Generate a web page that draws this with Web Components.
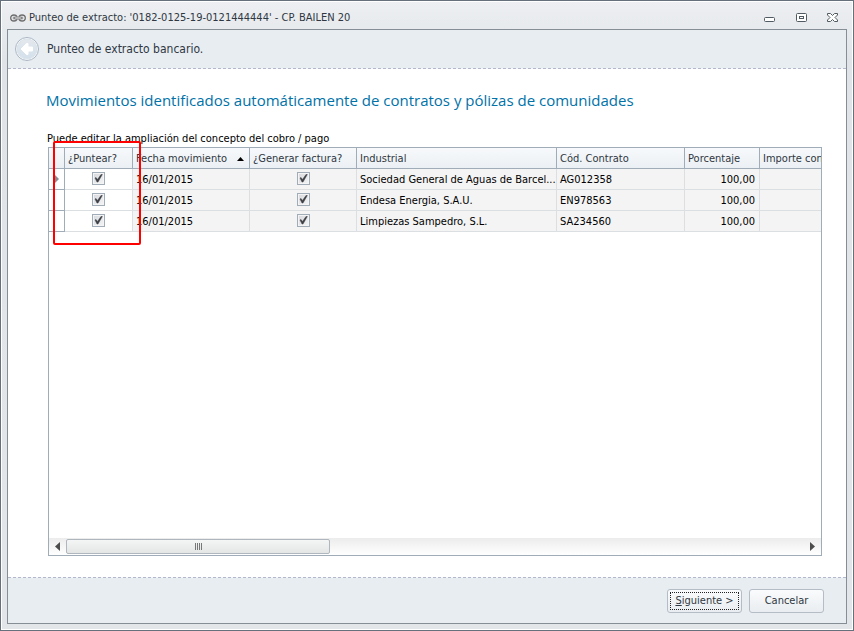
<!DOCTYPE html>
<html lang="es">
<head>
<meta charset="utf-8">
<title>Punteo de extracto</title>
<style>
html, body { margin: 0; height: 100%; }
body { font-family: "DejaVu Sans Condensed", "Noto Sans", sans-serif; font-size: 11px; color: #000; }
</style>
</head>
<body>
<wizard-window>
  <window-title slot="title">Punteo de extracto: '0182-0125-19-0121444444' - CP. BAILEN 20</window-title>
  <wizard-header slot="header">Punteo de extracto bancario.</wizard-header>
  <movements-page slot="page">
    <span slot="heading">Movimientos identificados automáticamente de contratos y pólizas de comunidades</span>
    <span slot="hint">Puede editar la ampliación del concepto del cobro / pago</span>
    <movements-grid></movements-grid>
  </movements-page>
  <push-button slot="actions" focused><u>S</u>iguiente &gt;</push-button>
  <push-button slot="actions">Cancelar</push-button>
</wizard-window>

<script>
const define = (name, html, setup) => {
  const template = document.createElement('template');
  template.innerHTML = html;
  customElements.define(name, class extends HTMLElement {
    constructor() {
      super();
      this.attachShadow({ mode: 'open' }).append(template.content.cloneNode(true));
    }
    connectedCallback() { if (setup) setup(this, this.shadowRoot); }
  });
};

define('wizard-window', `
<style>
  :host { display: flex; flex-direction: column; box-sizing: border-box; min-height: 100vh; padding: 1px 6px 6px;
    border: 1px solid #66707c; box-shadow: inset 0 0 0 1px #fff; background: linear-gradient(#edeff2, #e0e4e8 60px, #e3e6e9); }
  .panel { flex: 1; display: flex; flex-direction: column; border: 1px solid #868e95; background: #fff; min-width: 0; }
  main { flex: 1; display: flex; flex-direction: column; min-width: 0; }
  .dash { height: 1px; background: repeating-linear-gradient(90deg, #b3b9ca 0 3px, #f3f5f8 3px 5px); }
  footer { display: flex; justify-content: flex-end; gap: 7px; padding: 11px 22px 10px; background: #e8edf1; }
</style>
<slot name="title"></slot>
<div class="panel">
  <slot name="header"></slot>
  <div class="dash"></div>
  <main><slot name="page"></slot></main>
  <div class="dash"></div>
  <footer><slot name="actions"></slot></footer>
</div>`);

define('window-title', `
<style>
  :host { display: flex; align-items: center; height: 27px; padding: 4px 7px 0 3px; box-sizing: border-box; color: #2f3742; }
  .text { flex: 1; padding-left: 3px; white-space: nowrap; overflow: hidden; text-overflow: ellipsis; }
  .buttons { display: flex; gap: 19px; }
  button { display: flex; width: 13px; height: 13px; padding: 0; border: 0; background: none; }
  svg { display: block; }
</style>
<svg width="16" height="10" viewBox="0 0 16 10" fill="none">
  <path d="M7 3.500C6.500 2.500 5.500 2 4 2 2 2 .7 3.200.7 5S2 8 4 8c1.500 0 2.500-.5 3-1.500M9 3.500C9.500 2.500 10.500 2 12 2c2 0 3.300 1.200 3.300 3S14 8 12 8c-1.500 0-2.500-.5-3-1.500" stroke="#6a6a6a" stroke-width="1.300"/>
  <path d="M5.500 4.200H3.300v1.600h2.200M10.500 4.200h2.200v1.600h-2.200" stroke="#8d8d8d"/>
  <rect x="4.500" y="4" width="7" height="2" rx="1" fill="#eee" stroke="#5c5c5c" stroke-width=".8"/>
</svg>
<span class="text"><slot></slot></span>
<div class="buttons">
  <button aria-label="Minimizar"><svg width="13" height="13" fill="#fff" stroke="#505a62"><rect x="1.500" y="6.500" width="10" height="4" rx="1"/></svg></button>
  <button aria-label="Maximizar"><svg width="13" height="13" fill="#fff" stroke="#505a62"><rect x="1.500" y="2.500" width="10" height="8" rx="1"/><rect x="4.500" y="5.500" width="4" height="2"/></svg></button>
  <button aria-label="Cerrar"><svg width="13" height="13" fill="#fff" stroke="#505a62"><path d="M.5 2.500h3l2 2 2-2h3v1.500l-2.500 2.500 2.500 2.500v1.500h-3l-2-2-2 2h-3v-1.500l2.500-2.500-2.500-2.500z"/></svg></button>
</div>`);

define('wizard-header', `
<style>
  :host { display: flex; align-items: center; gap: 8px; height: 38px; padding-left: 7px; background: #e8edf1; color: #2f3742; font-size: 12px; white-space: nowrap; }
  button { width: 24px; height: 24px; padding: 0; border: 0; background: none; }
  svg { display: block; }
</style>
<button aria-label="Atrás"><svg width="24" height="24" viewBox="0 0 24 24">
  <defs><linearGradient id="g" x2="0" y2="1"><stop stop-color="#e3e8ed"/><stop offset="1" stop-color="#d3e0eb"/></linearGradient></defs>
  <circle cx="12" cy="12" r="11.500" fill="#fafcfd" stroke="#aab5c3"/><circle cx="12" cy="12" r="10" fill="url(#g)" stroke="#dbe3ea"/>
  <path d="M6 12l5.500-5.500h1.500V10h4.500v4H13v3.500h-1.500z" fill="#fff" stroke="#fff" stroke-linejoin="round"/>
</svg></button>
<slot></slot>`);

define('movements-page', `
<style>
  :host { flex: 1; display: flex; flex-direction: column; padding: 19px 24px 21px 40px; min-width: 0; }
  h1 { margin: 0 0 0 -2px; font: 15px/24px "Open Sans", "Noto Sans", sans-serif; color: #0072a8; }
  p { margin: 19px 0 0 -1px; line-height: 15px; }
</style>
<h1><slot name="heading"></slot></h1>
<p><slot name="hint"></slot></p>
<slot></slot>`);

define('check-box', `
<style>
  :host { display: inline-block; vertical-align: top; }
  label { display: grid; width: 13px; height: 13px; }
  input, svg { grid-area: 1 / 1; }
  input { appearance: none; box-sizing: border-box; width: 13px; height: 13px; margin: 0; border: 1px solid #a0acb8;
    background: linear-gradient(135deg, #d6d8dc, #f4f5f6); box-shadow: inset 0 0 0 1px #f4f4f4; }
  svg { pointer-events: none; visibility: hidden; }
  input:checked + svg { visibility: visible; }
</style>
<label><input type="checkbox" checked><svg width="13" height="13"><path d="M3 6l1-.5 1.500 2L9 2.500h1.300L6 10H5z" fill="#3c3f44" stroke="#3c3f44" stroke-width=".5"/></svg></label>`,
(el, root) => root.querySelector('input').setAttribute('aria-label', el.getAttribute('label')));

define('scroll-bar', `
<style>
  :host { display: flex; align-items: center; height: 17px; background: linear-gradient(#ececec, #fff); }
  button { display: flex; align-items: center; justify-content: center; width: 17px; height: 17px; padding: 0; border: 0; background: none; }
  .track { flex: 1; }
  .thumb { display: flex; align-items: center; justify-content: center; gap: 1px; box-sizing: border-box; width: 264px; height: 15px;
    border: 1px solid #b0b6bd; border-radius: 2px; background: linear-gradient(#f4f5f5, #e4e6e6); }
  i { width: 1px; height: 7px; background: #777; }
</style>
<button aria-label="Desplazar a la izquierda"><svg width="5" height="9"><path d="M5 0v9L0 4.500z" fill="#4c4c4c"/></svg></button>
<div class="track"><div class="thumb"><i></i><i></i><i></i><i></i></div></div>
<button aria-label="Desplazar a la derecha"><svg width="5" height="9"><path d="M0 0v9l5-4.500z" fill="#4c4c4c"/></svg></button>`);

define('movements-grid', `
<style>
  :host { position: relative; flex: 1; display: flex; flex-direction: column; border: 1px solid #a0acb8; margin-top: 1px; }
  .view { flex: 1; overflow: hidden; width: 0; min-width: 100%; }
  table { table-layout: fixed; width: 831px; border-spacing: 0; }
  th, td { box-sizing: border-box; height: 21px; padding: 2px 3px 0 3px; font-weight: normal; text-align: left; line-height: 16px;
    white-space: nowrap; border: 0 solid #dcdfe2; border-width: 0 1px 1px 0; }
  th { color: #2f3742; background: linear-gradient(#f7f9fb, #ebf0f4); border-color: #a0acb8; }
  td { background: #f4f4f4; }
  td.mark { padding: 0; background: #fff; border-color: #a0acb8; }
  td.mark svg { display: block; margin-left: auto; margin-right: 5px; }
  td.edit { background: #fff; }
  .check { text-align: center; }
  td.name { padding-right: 0; }
  .num { padding-right: 4px; text-align: right; }
  .sort { display: flex; align-items: center; justify-content: space-between; padding-right: 2px; }
  .frame { position: absolute; left: 4px; top: -7px; width: 84px; height: 100px; border: 2px solid #f00; border-radius: 2px; pointer-events: none; }
</style>
<div class="view"><table>
  <colgroup><col style="width:16px"><col style="width:68px"><col style="width:117px"><col style="width:107px"><col style="width:200px"><col style="width:128px"><col style="width:75px"><col style="width:120px"></colgroup>
  <thead><tr><th></th><th>¿Puntear?</th><th><div class="sort">Fecha movimiento<svg width="7" height="4"><path d="M0 4h7L3.500 0z"/></svg></div></th><th>¿Generar factura?</th><th>Industrial</th><th>Cód. Contrato</th><th>Porcentaje</th><th>Importe con</th></tr></thead>
  <tbody></tbody>
</table></div>
<scroll-bar></scroll-bar>
<div class="frame"></div>`,
(el, root) => {
  const rows = [
    ['16/01/2015', 'Sociedad General de Aguas de Barcel...', 'AG012358', '100,00'],
    ['16/01/2015', 'Endesa Energia, S.A.U.', 'EN978563', '100,00'],
    ['16/01/2015', 'Limpiezas Sampedro, S.L.', 'SA234560', '100,00'],
  ];
  const arrow = '<svg width="5" height="8"><path d="M0 0h1l4 4-4 4H0z" fill="#858c94"/></svg>';
  root.querySelector('tbody').innerHTML = rows.map(([date, name, code, pct], i) => `<tr>
    <td class="mark">${i ? '' : arrow}</td><td class="check edit"><check-box label="Puntear ${name}"></check-box></td>
    <td>${date}</td><td class="check"><check-box label="Generar factura ${name}"></check-box></td>
    <td class="name">${name}</td><td>${code}</td><td class="num">${pct}</td><td></td></tr>`).join('');
});

define('push-button', `
<style>
  :host { display: block; }
  button { display: block; width: 75px; height: 24px; padding: 2px; border: 1px solid #b4bcc6; border-radius: 3px;
    background: linear-gradient(#fafbfc, #e9edf1); font: inherit; color: #2f3742; white-space: nowrap; }
  span { display: block; box-sizing: border-box; height: 18px; line-height: 16px; border: 1px dotted transparent; }
  :host([focused]) span { border-color: #222; }
</style>
<button><span><slot></slot></span></button>`);
</script>
</body>
</html>
